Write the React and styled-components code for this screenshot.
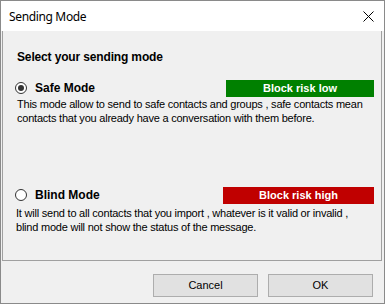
import React, { useState } from "react";
import styled, { createGlobalStyle } from "styled-components";

const Global = createGlobalStyle`
  html, body { margin: 0; padding: 0; background: #ffffff; }
  body { font-family: "Liberation Sans", Arial, sans-serif; }
  * { box-sizing: border-box; }
`;

const Window = styled.div`
  width: 385px;
  height: 304px;
  border: 1px solid #8a8a8a;
  background: #f0f0f0;
  display: flex;
  flex-direction: column;
`;

const TitleBar = styled.div`
  height: 30px;
  flex: none;
  background: #ffffff;
  display: flex;
  align-items: center;
  justify-content: space-between;
  padding: 0 8px 0 8px;
`;

const Title = styled.span`
  font-family: "Noto Sans", "Segoe UI", sans-serif;
  font-size: 12px;
  letter-spacing: -0.35px;
  color: #000;
  line-height: 16px;
  margin-top: 1px;
`;

const CloseBox = styled.div`
  width: 12px;
  height: 12px;
  margin-right: 2px;
  display: flex;
  align-items: center;
  justify-content: center;
`;

const Panel = styled.div`
  height: 230px;
  flex: none;
  margin: 0 2px 0 1px;
  border: 1px solid #a0a0a0;
  border-top: none;
  padding: 18px 7px 0 12px;
  display: flex;
  flex-direction: column;
`;

const Heading = styled.div`
  font-size: 12px;
  font-weight: bold;
  line-height: 16px;
  height: 16px;
  margin-left: 2px;
  letter-spacing: -0.15px;
  color: #000;
`;

const ModeRow = styled.label`
  display: flex;
  align-items: center;
  justify-content: space-between;
  height: 18px;
  margin-top: ${(p) => p.$top}px;
  cursor: default;
`;

const RadioWrap = styled.span`
  display: flex;
  align-items: center;
  gap: 8px;
`;

const RadioCircle = styled.span`
  width: 12px;
  height: 12px;
  border-radius: 50%;
  border: 1px solid #333333;
  background: #ffffff;
  display: flex;
  align-items: center;
  justify-content: center;
  &::after {
    content: "";
    width: 6px;
    height: 6px;
    border-radius: 50%;
    background: ${(p) => (p.$checked ? "#333333" : "transparent")};
  }
`;

const ModeName = styled.span`
  font-size: 12px;
  font-weight: bold;
  line-height: 16px;
  color: #000;
`;

const RiskBar = styled.div`
  width: ${(p) => p.$width}px;
  height: 17px;
  background: ${(p) => p.$color};
  color: #ffffff;
  font-size: 11px;
  font-weight: bold;
  display: flex;
  align-items: center;
  justify-content: center;
  line-height: 17px;
`;

const Desc = styled.div`
  font-size: 11px;
  line-height: 14px;
  color: #000;
  white-space: nowrap;
  letter-spacing: -0.22px;
  margin-left: ${(p) => p.$left}px;
  margin-top: ${(p) => p.$top}px;
`;

const Footer = styled.div`
  flex: 1;
  display: flex;
  justify-content: flex-end;
  align-items: flex-start;
  gap: 10px;
  padding: 13px 11px 0 0;
`;

const Button = styled.button`
  width: 105px;
  height: 23px;
  background: #e1e1e1;
  border: 1px solid #adadad;
  font-family: "Liberation Sans", Arial, sans-serif;
  font-size: 11px;
  color: #000;
  padding: 0;
  margin: 0;
  line-height: 21px;
  border-radius: 0;
`;

export default function App() {
  const [mode, setMode] = useState("safe");
  return (
    <>
      <Global />
      <Window>
        <TitleBar>
          <Title>Sending Mode</Title>
          <CloseBox>
            <svg width="11" height="11" viewBox="0 0 11 11">
              <path d="M0.5 0.5 L10.5 10.5 M10.5 0.5 L0.5 10.5" stroke="#000" strokeWidth="1" fill="none" />
            </svg>
          </CloseBox>
        </TitleBar>
        <Panel>
          <Heading>Select your sending mode</Heading>
          <ModeRow $top={14} onClick={() => setMode("safe")}>
            <RadioWrap>
              <RadioCircle $checked={mode === "safe"} />
              <ModeName>Safe Mode</ModeName>
            </RadioWrap>
            <RiskBar $color="#008000" $width={148}>Block risk low</RiskBar>
          </ModeRow>
          <Desc $left={2} $top={0}>
            This mode allow to send to safe contacts and groups , safe contacts mean
            <br />
            contacts that you already have a conversation with them before.
          </Desc>
          <ModeRow $top={61} onClick={() => setMode("blind")}>
            <RadioWrap>
              <RadioCircle $checked={mode === "blind"} />
              <ModeName>Blind Mode</ModeName>
            </RadioWrap>
            <RiskBar $color="#c00000" $width={151}>Block risk high</RiskBar>
          </ModeRow>
          <Desc $left={1} $top={2}>
            It will send to all contacts that you import , whatever is it valid or invalid ,
            <br />
            blind mode will not show the status of the message.
          </Desc>
        </Panel>
        <Footer>
          <Button>Cancel</Button>
          <Button>OK</Button>
        </Footer>
      </Window>
    </>
  );
}
